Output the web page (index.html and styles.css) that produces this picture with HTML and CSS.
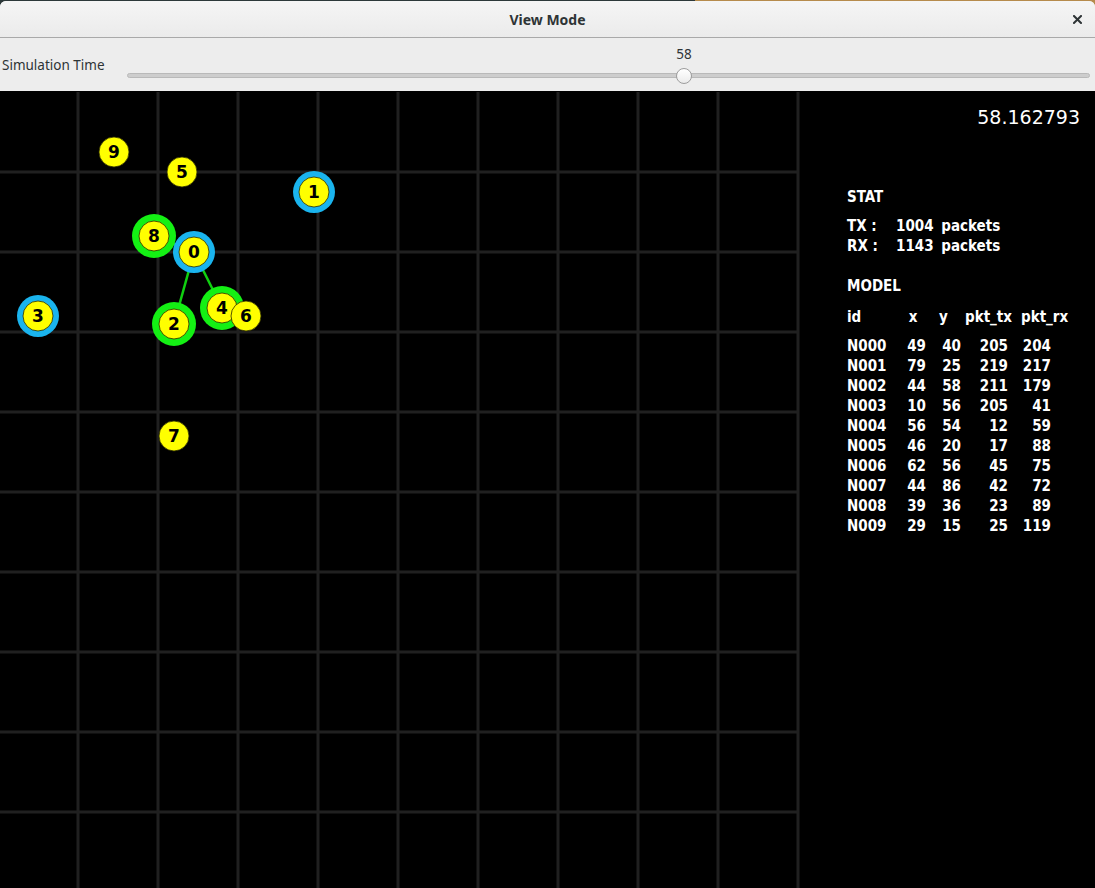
FILE: index.html
```html
<!DOCTYPE html>
<html>
<head>
<meta charset="utf-8">
<title>View Mode</title>
<link rel="stylesheet" href="styles.css">
</head>
<body>
<div class="window">
  <header class="titlebar">
    <div class="title">View Mode</div>
    <button class="close" aria-label="Close">
      <svg width="9" height="9" viewBox="0 0 9 9"><path d="M1 1L8 8M8 1L1 8" stroke="#2e3436" stroke-width="2" stroke-linecap="square"/></svg>
    </button>
  </header>
  <div class="toolbar">
    <div class="label">Simulation Time</div>
    <div class="slider" style="--v:0.58">
      <div class="slider-value">58</div>
      <div class="track"><div class="thumb"></div></div>
    </div>
  </div>
  <div class="view">
    <svg class="canvas" width="800" height="797" viewBox="0 0 800 797">
      <g transform="translate(-2,1)">
        <g class="grid">
          <line x1="80" y1="0" x2="80" y2="800"/>
          <line x1="160" y1="0" x2="160" y2="800"/>
          <line x1="240" y1="0" x2="240" y2="800"/>
          <line x1="320" y1="0" x2="320" y2="800"/>
          <line x1="400" y1="0" x2="400" y2="800"/>
          <line x1="480" y1="0" x2="480" y2="800"/>
          <line x1="560" y1="0" x2="560" y2="800"/>
          <line x1="640" y1="0" x2="640" y2="800"/>
          <line x1="720" y1="0" x2="720" y2="800"/>
          <line x1="800" y1="0" x2="800" y2="800"/>
          <line x1="0" y1="80" x2="800" y2="80"/>
          <line x1="0" y1="160" x2="800" y2="160"/>
          <line x1="0" y1="240" x2="800" y2="240"/>
          <line x1="0" y1="320" x2="800" y2="320"/>
          <line x1="0" y1="400" x2="800" y2="400"/>
          <line x1="0" y1="480" x2="800" y2="480"/>
          <line x1="0" y1="560" x2="800" y2="560"/>
          <line x1="0" y1="640" x2="800" y2="640"/>
          <line x1="0" y1="720" x2="800" y2="720"/>
        </g>
        <g class="edges">
          <line x1="196" y1="160" x2="176" y2="232"/>
          <line x1="196" y1="160" x2="224" y2="216"/>
          <line x1="196" y1="160" x2="156" y2="144"/>
        </g>
        <g class="ring-green">
          <circle cx="156" cy="144" r="22"/>
          <circle cx="176" cy="232" r="22"/>
          <circle cx="224" cy="216" r="22"/>
        </g>
        <g class="ring-cyan">
          <circle cx="196" cy="160" r="21"/>
          <circle cx="316" cy="100" r="21"/>
          <circle cx="40" cy="224" r="21"/>
        </g>
        <g class="node">
          <circle cx="196" cy="160" r="15"/><text x="196" y="166">0</text>
          <circle cx="316" cy="100" r="15"/><text x="316" y="106">1</text>
          <circle cx="176" cy="232" r="15"/><text x="176" y="238">2</text>
          <circle cx="40" cy="224" r="15"/><text x="40" y="230">3</text>
          <circle cx="224" cy="216" r="15"/><text x="224" y="222">4</text>
          <circle cx="184" cy="80" r="15"/><text x="184" y="86">5</text>
          <circle cx="248" cy="224" r="15"/><text x="248" y="230">6</text>
          <circle cx="176" cy="344" r="15"/><text x="176" y="350">7</text>
          <circle cx="156" cy="144" r="15"/><text x="156" y="150">8</text>
          <circle cx="116" cy="60" r="15"/><text x="116" y="66">9</text>
        </g>
      </g>
    </svg>
    <div class="panel">
      <div class="clock">58.162793</div>
      <div class="heading stat">STAT</div>
      <div class="stat-line tx"><span class="stat-key">TX :</span>1004 packets</div>
      <div class="stat-line"><span class="stat-key">RX :</span>1143 packets</div>
      <div class="heading model">MODEL</div>
      <div class="table">
        <div class="row head">
          <span class="h-id">id</span><span class="h-x">x</span><span class="h-y">y</span><span class="h-tx">pkt_tx</span><span class="h-rx">pkt_rx</span>
        </div>
        <div class="body">
          <div class="row"><span>N000</span><span>49</span><span>40</span><span>205</span><span>204</span></div>
          <div class="row"><span>N001</span><span>79</span><span>25</span><span>219</span><span>217</span></div>
          <div class="row"><span>N002</span><span>44</span><span>58</span><span>211</span><span>179</span></div>
          <div class="row"><span>N003</span><span>10</span><span>56</span><span>205</span><span>41</span></div>
          <div class="row"><span>N004</span><span>56</span><span>54</span><span>12</span><span>59</span></div>
          <div class="row"><span>N005</span><span>46</span><span>20</span><span>17</span><span>88</span></div>
          <div class="row"><span>N006</span><span>62</span><span>56</span><span>45</span><span>75</span></div>
          <div class="row"><span>N007</span><span>44</span><span>86</span><span>42</span><span>72</span></div>
          <div class="row"><span>N008</span><span>39</span><span>36</span><span>23</span><span>89</span></div>
          <div class="row"><span>N009</span><span>29</span><span>15</span><span>25</span><span>119</span></div>
        </div>
      </div>
    </div>
  </div>
</div>
</body>
</html>
```

FILE: styles.css
```css
* { box-sizing: border-box; }

html, body {
  margin: 0;
  padding: 0;
}

body {
  width: 1095px;
  height: 888px;
  overflow: hidden;
  background: linear-gradient(to right, #2d393a 0, #2d393a 695px, #b68b4c 695px, #b68b4c 100%);
  font-family: "Noto Sans", "DejaVu Sans", sans-serif;
}

.window {
  height: 887px;
  margin-top: 1px;
  display: flex;
  flex-direction: column;
  border-radius: 6px 6px 0 0;
  overflow: hidden;
  background: #ededed;
}

.titlebar {
  height: 37px;
  flex: none;
  border-bottom: 1px solid #a9a9a9;
  background: linear-gradient(#f5f5f5, #ebebeb);
  display: grid;
  grid-template-columns: 1fr auto 1fr;
  align-items: center;
}

.title {
  grid-column: 2;
  font-weight: bold;
  font-size: 14px;
  line-height: 18px;
  color: #2e3436;
  margin-top: 1px;
}

.close {
  grid-column: 3;
  justify-self: end;
  margin-right: 13px;
  margin-top: 1px;
  padding: 0;
  border: 0;
  background: none;
  width: 9px;
  height: 9px;
  display: flex;
}

.toolbar {
  height: 53px;
  flex: none;
  display: flex;
  align-items: flex-start;
  background: #ededed;
}

.label {
  margin-left: 2px;
  margin-top: 18px;
  font-size: 13.5px;
  line-height: 18px;
  color: #2e3436;
  white-space: nowrap;
}

.slider {
  flex: 1;
  margin-left: 22px;
  margin-right: 5px;
  display: flex;
  flex-direction: column;
}

.slider-value {
  width: 16px;
  margin-left: calc((100% - 16px) * var(--v));
  margin-top: 7px;
  text-align: center;
  font-size: 13.5px;
  line-height: 18px;
  color: #2e3436;
  white-space: nowrap;
  display: flex;
  justify-content: center;
}

.track {
  position: relative;
  height: 5px;
  margin-top: 10px;
  border: 1px solid #b9b9b9;
  border-radius: 3px;
  background: #cdcdcd;
}

.thumb {
  position: absolute;
  top: -6px;
  left: calc((100% - 16px) * var(--v));
  width: 16px;
  height: 16px;
  border-radius: 50%;
  border: 1px solid #9d9d9d;
  background: linear-gradient(#ffffff, #ebebeb);
}

.view {
  flex: 1;
  display: flex;
  background: #000;
  min-height: 0;
}

.canvas {
  display: block;
  flex: none;
}

.grid line {
  stroke: #202020;
  stroke-width: 3;
}

.edges line {
  stroke: #10d010;
  stroke-width: 2.5;
}

.ring-green circle { fill: #14f014; }
.ring-cyan circle { fill: #1ab4ee; }

.node circle {
  fill: #ffff00;
  stroke: #2a2a00;
  stroke-width: 0.8;
}

.node text {
  fill: #000;
  font-family: "DejaVu Sans", sans-serif;
  font-weight: bold;
  font-size: 17px;
  text-anchor: middle;
}

.panel {
  flex: 1;
  padding: 14px 15px 0 47px;
  color: #fff;
  font-family: "DejaVu Sans", sans-serif;
  font-stretch: condensed;
  font-weight: bold;
  font-size: 15px;
  line-height: 20px;
}

.clock {
  font-weight: normal;
  font-stretch: normal;
  font-size: 19px;
  line-height: 24px;
  text-align: right;
}

.heading.stat { margin-top: 58px; }
.stat-line.tx { margin-top: 9px; }

.stat-key {
  display: inline-block;
  width: 49px;
}

.stat-line { word-spacing: 3px; white-space: nowrap; }
.stat-key { word-spacing: 0; }

.heading.model { margin-top: 20px; }

.table { margin-top: 11px; }

.row {
  display: grid;
  grid-template-columns: 53px 26px 35px 47px 43px;
  white-space: nowrap;
}

.row span { text-align: right; }
.row span:first-child { text-align: left; }

.body { margin-top: 9px; }

.head span { text-align: left; }
.head .h-x { justify-self: center; }
.head .h-y { justify-self: center; }
.head .h-tx { margin-left: 4px; }
.head .h-rx { margin-left: 13px; }
```
